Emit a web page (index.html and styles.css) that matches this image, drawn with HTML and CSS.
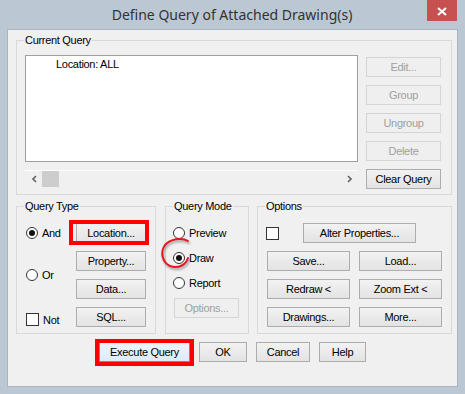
FILE: index.html
```html
<!DOCTYPE html>
<html lang="en">
<head>
    <meta charset="UTF-8">
    <title>Define Query of Attached Drawing(s)</title>
    <link rel="stylesheet" href="styles.css">
</head>
<body>
    <div class="window">
        <div class="titlebar">
            <div class="title">Define Query of Attached Drawing(s)</div>
            <button class="close-btn" aria-label="Close">
                <svg width="10" height="9" viewBox="0 0 10 9">
                    <path d="M1 1 L9 8 M9 1 L1 8" stroke="#fff" stroke-width="2" fill="none"/>
                </svg>
            </button>
        </div>

        <div class="client">
            <div class="group current-group">
                <span class="group-title">Current Query</span>
                <div class="list-col">
                    <div class="listbox">
                        <div class="list-item">Location: ALL</div>
                    </div>
                    <div class="hscroll">
                        <span class="arrow">
                            <svg width="6" height="8" viewBox="0 0 6 8"><path d="M5 1 L2 4 L5 7" stroke="#606060" stroke-width="1.6" fill="none"/></svg>
                        </span>
                        <span class="thumb"></span>
                        <span class="track"></span>
                        <span class="arrow">
                            <svg width="6" height="8" viewBox="0 0 6 8"><path d="M1 1 L4 4 L1 7" stroke="#606060" stroke-width="1.6" fill="none"/></svg>
                        </span>
                    </div>
                </div>
                <div class="side-buttons">
                    <button class="btn" disabled>Edit...</button>
                    <button class="btn" disabled>Group</button>
                    <button class="btn" disabled>Ungroup</button>
                    <button class="btn" disabled>Delete</button>
                    <button class="btn">Clear Query</button>
                </div>
            </div>

            <div class="lower">
                <div class="group type-group">
                    <span class="group-title">Query Type</span>
                    <label class="choice row-and"><span class="radio checked"></span>And</label>
                    <button class="btn marked loc-mark">Location...</button>
                    <label class="choice row-or"><span class="radio"></span>Or</label>
                    <button class="btn">Property...</button>
                    <button class="btn">Data...</button>
                    <label class="choice row-not"><span class="checkbox"></span>Not</label>
                    <button class="btn">SQL...</button>
                </div>

                <div class="group mode-group">
                    <span class="group-title">Query Mode</span>
                    <label class="choice"><span class="radio"></span>Preview</label>
                    <label class="choice"><span class="radio checked"></span>Draw</label>
                    <label class="choice"><span class="radio"></span>Report</label>
                    <button class="btn options-btn" disabled>Options...</button>
                    <svg class="ring" width="36" height="36" viewBox="0 0 36 36">
                        <path d="M30 5 C24 1, 12 3, 7 9 C2 16, 4 26, 12 30 C20 33, 28 29, 30 22" stroke="#e8141e" stroke-width="2" fill="none" stroke-linecap="round"/>
                    </svg>
                </div>

                <div class="group options-group">
                    <span class="group-title">Options</span>
                    <div class="alter-row">
                        <span class="checkbox"></span>
                        <button class="btn alter-btn">Alter Properties...</button>
                    </div>
                    <button class="btn">Save...</button>
                    <button class="btn">Load...</button>
                    <button class="btn">Redraw &lt;</button>
                    <button class="btn">Zoom Ext &lt;</button>
                    <button class="btn">Drawings...</button>
                    <button class="btn">More...</button>
                </div>
            </div>

            <div class="dialog-buttons">
                <button class="btn default marked exec-mark">Execute Query</button>
                <button class="btn ok-btn">OK</button>
                <button class="btn cancel-btn">Cancel</button>
                <button class="btn help-btn">Help</button>
            </div>
        </div>
    </div>
</body>
</html>
```

FILE: styles.css
```css
* {
    margin: 0;
    padding: 0;
    box-sizing: border-box;
}

body {
    font-family: 'Liberation Sans', Arial, sans-serif;
    font-size: 11px;
    letter-spacing: -0.3px;
    color: #000;
    background: #bcc7d4;
}

.window {
    width: 465px;
    height: 394px;
    background: #bcc7d4;
    padding: 0 8px;
}

.titlebar {
    display: flex;
    align-items: flex-start;
    height: 30px;
    margin: 0 -8px;
}

.title {
    flex: 1;
    padding-left: 37px;
    text-align: center;
    line-height: 30px;
    font-family: 'Noto Sans', sans-serif;
    font-size: 14px;
    letter-spacing: 0;
    color: #333;
}

.close-btn {
    width: 30px;
    height: 21px;
    margin-right: 8px;
    border: none;
    background: #c75050;
    display: flex;
    align-items: center;
    justify-content: center;
    padding-top: 1px;
}

.client {
    width: 449px;
    height: 356px;
    background: #f0f0f0;
    padding: 10px 0 0 8px;
    box-shadow: 0 0 0 1px #aab5c1;
}

/* group boxes */
.group {
    position: relative;
    border: 1px solid #d9d9d9;
}

.group-title {
    position: absolute;
    top: -7px;
    left: 7px;
    padding: 0 1px;
    line-height: 13px;
    background: #f0f0f0;
}

.current-group {
    width: 436px;
    height: 155px;
    padding: 14px 0 0 8px;
    display: flex;
    gap: 8px;
}

.list-col {
    width: 333px;
}

.listbox {
    height: 107px;
    background: #fff;
    border: 1px solid #a0a0a0;
    padding: 2px 0 0 30px;
}

.list-item {
    line-height: 13px;
}

.hscroll {
    display: flex;
    height: 17px;
    margin-top: 8px;
    border-top: 1px solid #fff;
}

.hscroll .arrow {
    width: 17px;
    display: flex;
    align-items: center;
    justify-content: center;
}

.hscroll .thumb {
    width: 17px;
    background: #cdcdcd;
}

.hscroll .track {
    flex: 1;
}

.side-buttons {
    width: 75px;
    margin-top: 2px;
    display: flex;
    flex-direction: column;
    gap: 8px;
}

/* buttons */
.btn {
    height: 20px;
    border: 1px solid #adadad;
    background: linear-gradient(#f2f2f2, #e3e3e3);
    font-family: 'Liberation Sans', Arial, sans-serif;
    font-size: 11px;
    letter-spacing: -0.3px;
    color: #000;
    display: flex;
    align-items: center;
    justify-content: center;
    white-space: nowrap;
}

.btn:disabled {
    border-color: #d5d5d5;
    background: #efefef;
    color: #a0a0a0;
}

.btn.default {
    border-color: #3c9af0;
    background: linear-gradient(#ecf5fd, #dcecfc);
}

.marked {
    position: relative;
}

.marked::after {
    content: '';
    position: absolute;
    border: 4px solid #f00;
}

.loc-mark::after {
    left: -8px;
    right: -4px;
    top: -4px;
    bottom: -3px;
}

.exec-mark::after {
    left: -5px;
    right: -5px;
    top: -4px;
    bottom: -5px;
}

/* check controls */
.choice {
    display: flex;
    align-items: center;
    gap: 4px;
}

.radio {
    width: 12px;
    height: 12px;
    border: 1px solid #333;
    border-radius: 50%;
    background: #fff;
    display: flex;
    align-items: center;
    justify-content: center;
}

.radio.checked::before {
    content: '';
    width: 6px;
    height: 6px;
    border-radius: 50%;
    background: #111;
}

.checkbox {
    width: 13px;
    height: 13px;
    border: 1px solid #333;
    background: #fff;
}

.lower {
    display: flex;
    gap: 9px;
    margin-top: 11px;
}

.type-group {
    width: 140px;
    height: 128px;
    padding: 16px 9px 0 9px;
    display: grid;
    grid-template-columns: 1fr 70px;
    grid-template-rows: 20px 20px 20px 20px;
    gap: 8px 0;
}

.type-group .btn {
    grid-column: 2;
}

.row-and {
    grid-column: 1;
    grid-row: 1;
}

.row-or {
    grid-column: 1;
    grid-row: 2 / 4;
}

.row-not {
    grid-column: 1;
    grid-row: 4;
    padding-top: 5px;
}

.mode-group {
    width: 84px;
    height: 128px;
    padding: 16px 0 0 7px;
    display: flex;
    flex-direction: column;
    gap: 5px;
    margin-right: -1px;
}

.mode-group .choice {
    height: 20px;
}

.options-btn {
    width: 65px;
    margin-left: 1px;
}

.ring {
    position: absolute;
    left: -8px;
    top: 29px;
    filter: drop-shadow(1px 2px 1px rgba(0, 0, 0, 0.35));
}

.options-group {
    width: 195px;
    height: 128px;
    padding: 16px 0 0 9px;
    display: grid;
    grid-template-columns: 83px 83px;
    grid-template-rows: 20px 20px 20px 20px;
    gap: 8px 9px;
}

.alter-row {
    grid-column: 1 / 3;
    display: flex;
    align-items: center;
}

.alter-row .checkbox {
    margin-left: -1px;
}

.alter-btn {
    width: 113px;
    margin-left: 24px;
}

.dialog-buttons {
    display: flex;
    justify-content: center;
    gap: 9px;
    margin-top: 8px;
    padding-right: 8px;
}

.exec-mark {
    width: 91px;
}

.ok-btn {
    width: 48px;
}

.cancel-btn {
    width: 54px;
}

.help-btn {
    width: 47px;
}
```
